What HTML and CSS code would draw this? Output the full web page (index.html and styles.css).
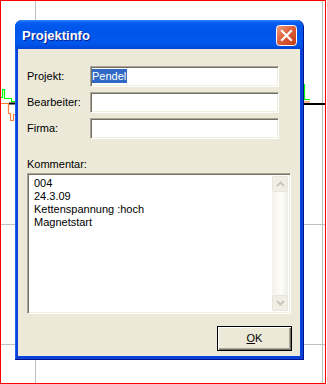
FILE: index.html
```html
<!DOCTYPE html>
<html>
<head>
<meta charset="utf-8">
<link rel="stylesheet" href="styles.css">
</head>
<body>
<div class="desk">
  <svg class="plot" width="327" height="384" viewBox="0 0 327 384">
    <rect x="0.5" y="0.5" width="325" height="383" fill="none" stroke="#ff0000" stroke-width="1"/>
    <line x1="35.5" y1="1" x2="35.5" y2="383" stroke="#c0c0c0"/>
    <line x1="322.5" y1="1" x2="322.5" y2="383" stroke="#c0c0c0"/>
    <line x1="1" y1="224.5" x2="325" y2="224.5" stroke="#c0c0c0"/>
    <line x1="1" y1="344.5" x2="325" y2="344.5" stroke="#c0c0c0"/>
    <polyline points="1,97.5 2.5,97.5 2.5,89.5 4.5,89.5 4.5,98.5 11.5,98.5 11.5,101.5 16,101.5" fill="none" stroke="#00ff00" stroke-width="1.2"/>
    <polyline points="1,103.5 8.5,103.5 8.5,113.5 10.5,113.5 10.5,120.5 13.5,120.5 13.5,114.5 16,114.5" fill="none" stroke="#ff8040" stroke-width="1.2"/>
    <line x1="9" y1="103.5" x2="16" y2="103.5" stroke="#000" stroke-width="2"/>
    <polyline points="304.5,84 304.5,99.5 310,99.5" fill="none" stroke="#00ff00" stroke-width="1.2"/>
    <line x1="304" y1="102" x2="310" y2="102" stroke="#ff8040" stroke-width="1.2"/>
    <line x1="304" y1="104" x2="325" y2="104" stroke="#000" stroke-width="2"/>
  </svg>

  <div class="win">
    <div class="titlebar">
      <span class="title">Projektinfo</span>
      <span class="close">
        <svg width="21" height="21" viewBox="0 0 21 21">
          <defs>
            <linearGradient id="cg" x1="0" y1="0" x2="1" y2="1">
              <stop offset="0" stop-color="#f0a27f"/>
              <stop offset="0.45" stop-color="#e0603a"/>
              <stop offset="1" stop-color="#c03a17"/>
            </linearGradient>
          </defs>
          <rect x="0.5" y="0.5" width="20" height="20" rx="3" ry="3" fill="url(#cg)" stroke="#ffffff"/>
          <path d="M6 6 L15 15 M15 6 L6 15" stroke="#ffffff" stroke-width="2.2" stroke-linecap="square"/>
        </svg>
      </span>
    </div>
    <div class="client">
      <div class="fields">
        <span class="lbl">Projekt:</span>
        <div class="field"><span class="sel">Pendel</span></div>
        <span class="lbl">Bearbeiter:</span>
        <div class="field"></div>
        <span class="lbl">Firma:</span>
        <div class="field"></div>
      </div>
      <div class="lbl komm">Kommentar:</div>
      <div class="memo">
        <div class="memo-text">004<br>24.3.09<br>Kettenspannung :hoch<br>Magnetstart</div>
        <div class="vscroll">
          <span class="sbtn">
            <svg width="9" height="6" viewBox="0 0 9 6"><path d="M1 5 L4.5 1.5 L8 5" fill="none" stroke="#c9c7ba" stroke-width="2"/></svg>
          </span>
          <span class="strack"></span>
          <span class="sbtn">
            <svg width="9" height="6" viewBox="0 0 9 6"><path d="M1 1 L4.5 4.5 L8 1" fill="none" stroke="#c9c7ba" stroke-width="2"/></svg>
          </span>
        </div>
      </div>
      <div class="actions">
        <span class="okbtn"><span class="ul">O</span>K</span>
      </div>
    </div>
  </div>
</div>
</body>
</html>
```

FILE: styles.css
```css
html, body {
  margin: 0;
  padding: 0;
  background: #ffffff;
}

.desk {
  position: relative;
  width: 327px;
  height: 384px;
  overflow: hidden;
  font-family: "Liberation Sans", Arial, sans-serif;
  font-size: 11px;
  color: #000;
}

.plot {
  position: absolute;
  left: 0;
  top: 0;
}

.win {
  position: absolute;
  left: 15px;
  top: 20px;
  width: 289px;
  height: 340px;
  box-sizing: border-box;
  display: flex;
  flex-direction: column;
  background: #0842d8;
  border-radius: 7px 7px 0 0;
  padding: 0 3px 3px 3px;
  border-right: 1px solid #00138c;
  border-bottom: 1px solid #00138c;
  box-shadow: inset 1px 0 #1c5ff0;
}

.titlebar {
  height: 29px;
  flex: none;
  margin: 0 -3px;
  padding: 0 6px 0 7px;
  border-radius: 7px 7px 0 0;
  background: linear-gradient(#3d8ef8 0px, #0a62f4 2px, #0058ee 5px, #0054e8 12px, #0058ee 20px, #0055eb 24px, #0046d6 29px);
  display: flex;
  align-items: center;
  justify-content: space-between;
}

.title {
  font-family: "Liberation Sans", Arial, sans-serif;
  font-weight: bold;
  font-size: 13px;
  color: #ffffff;
  text-shadow: 1px 1px 0 #0a1e8c;
  margin-top: 1px;
}

.close {
  display: block;
  width: 21px;
  height: 21px;
  margin-top: 2px;
}

.close svg {
  display: block;
}

.client {
  flex: 1;
  background: #ece9d8;
  display: flex;
  flex-direction: column;
  padding: 17px 8px 5px 9px;
}

.fields {
  display: grid;
  grid-template-columns: 63px 189px;
  row-gap: 5px;
  align-items: center;
}

.lbl {
  line-height: 13px;
}

.field {
  height: 21px;
  box-sizing: border-box;
  background: #fff;
  border-style: solid;
  border-width: 1px;
  border-color: #aca899 #ffffff #ffffff #aca899;
  box-shadow: inset 1px 1px #716f64, inset -1px -1px #f1efe2;
  padding: 2px 0 0 1px;
  display: flex;
  align-items: flex-start;
}

.sel {
  background: #316ac5;
  color: #fff;
  line-height: 14px;
  height: 14px;
  display: inline-block;
  padding: 0 1px 0 0;
}

.komm {
  margin-top: 19px;
}

.memo {
  margin-top: 2px;
  width: 264px;
  height: 141px;
  box-sizing: border-box;
  background: #fff;
  border-style: solid;
  border-width: 1px;
  border-color: #aca899 #ffffff #ffffff #aca899;
  box-shadow: inset 1px 1px #716f64, inset -1px -1px #f1efe2;
  padding: 2px 2px 2px 2px;
  display: flex;
}

.memo-text {
  flex: 1;
  padding: 1px 0 0 4px;
  line-height: 13px;
}

.vscroll {
  width: 16px;
  display: flex;
  flex-direction: column;
  background: linear-gradient(90deg, #f3f1ea, #fdfdfa 60%, #eeede5);
}

.sbtn {
  height: 16px;
  box-sizing: border-box;
  border: 1px solid #e8e6dc;
  border-radius: 2px;
  background: #f0efe6;
  display: flex;
  align-items: center;
  justify-content: center;
}

.sbtn svg {
  display: block;
}

.strack {
  flex: 1;
}

.actions {
  margin-top: auto;
  display: flex;
  justify-content: flex-end;
}

.okbtn {
  width: 75px;
  height: 25px;
  box-sizing: border-box;
  border: 1px solid #000;
  background: #ece9d8;
  box-shadow: inset 1px 1px #ffffff, inset -1px -1px #716f64, inset -2px -2px #aca899;
  display: flex;
  align-items: center;
  justify-content: center;
  line-height: 13px;
}

.ul {
  text-decoration: underline;
}
```
